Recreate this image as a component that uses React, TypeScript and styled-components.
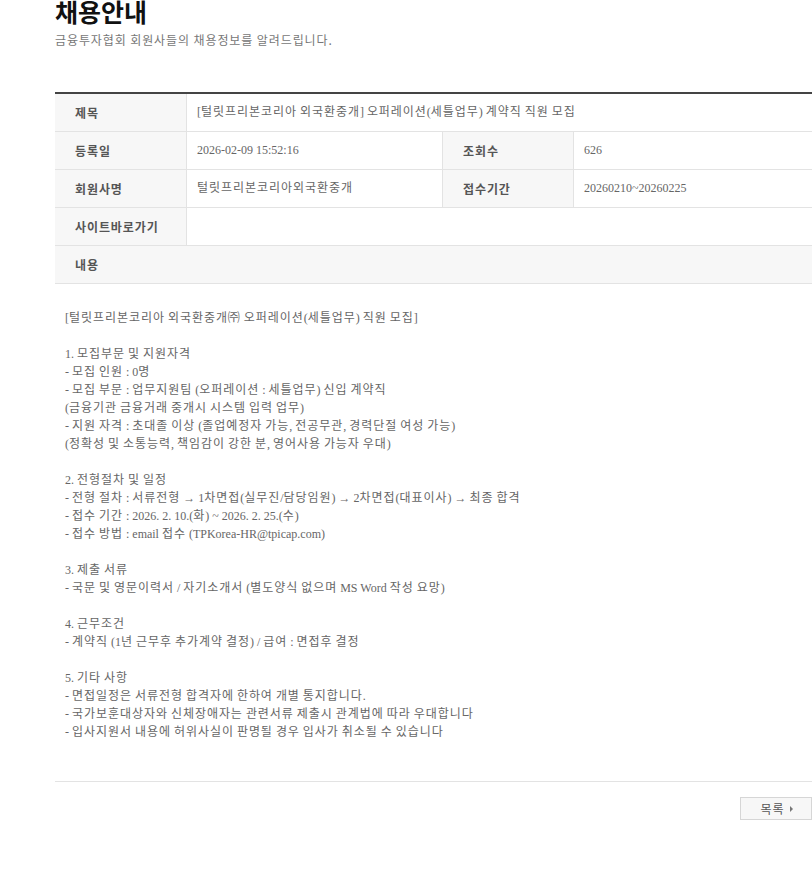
import styled, { createGlobalStyle } from 'styled-components';

const GlobalStyle = createGlobalStyle`
  html, body {
    margin: 0;
    padding: 0;
    background: #fff;
    overflow-x: hidden;
  }
  body {
    font-family: "Liberation Serif", "Noto Sans CJK KR", serif;
  }
`;

const body = `[털릿프리본코리아 외국환중개㈜ 오퍼레이션(세틀업무) 직원 모집]

1. 모집부문 및 지원자격
- 모집 인원 : 0명
- 모집 부문 : 업무지원팀 (오퍼레이션 : 세틀업무) 신입 계약직
(금융기관 금융거래 중개시 시스템 입력 업무)
- 지원 자격 : 초대졸 이상 (졸업예정자 가능, 전공무관, 경력단절 여성 가능)
(정확성 및 소통능력, 책임감이 강한 분, 영어사용 가능자 우대)

2. 전형절차 및 일정
- 전형 절차 : 서류전형 → 1차면접(실무진/담당임원) → 2차면접(대표이사) → 최종 합격
- 접수 기간 : 2026. 2. 10.(화) ~ 2026. 2. 25.(수)
- 접수 방법 : email 접수 (TPKorea-HR@tpicap.com)

3. 제출 서류
- 국문 및 영문이력서 / 자기소개서 (별도양식 없으며 MS Word 작성 요망)

4. 근무조건
- 계약직 (1년 근무후 추가계약 결정) / 급여 : 면접후 결정

5. 기타 사항
- 면접일정은 서류전형 합격자에 한하여 개별 통지합니다.
- 국가보훈대상자와 신체장애자는 관련서류 제출시 관계법에 따라 우대합니다
- 입사지원서 내용에 허위사실이 판명될 경우 입사가 취소될 수 있습니다`;

// hangul glyphs in the reference are full width, so runs of them get a bit of tracking
const han = (text: string) =>
  text.split(/([\uAC00-\uD7A3\u3200-\u32FF]+)/).map((part, i) =>
    /[\uAC00-\uD7A3\u3200-\u32FF]/.test(part) ? <S.Han key={i}>{part}</S.Han> : part
  );

export default function App() {
  return (
    <>
      <GlobalStyle />
      <S.Page>
        <S.Header>
          <h2 className='title'>채용안내</h2>
          <p className='sub'>금융투자협회 회원사들의 채용정보를 알려드립니다.</p>
        </S.Header>

        <S.Board>
          <S.Row $cols='132px 1fr'>
            <S.Label>제목</S.Label>
            <S.Value>{han('[털릿프리본코리아 외국환중개] 오퍼레이션(세틀업무) 계약직 직원 모집')}</S.Value>
          </S.Row>
          <S.Row $cols='132px 255px 132px 1fr'>
            <S.Label>등록일</S.Label>
            <S.Value>2026-02-09 15:52:16</S.Value>
            <S.Label $inner>조회수</S.Label>
            <S.Value>626</S.Value>
          </S.Row>
          <S.Row $cols='132px 255px 132px 1fr'>
            <S.Label>회원사명</S.Label>
            <S.Value>{han('털릿프리본코리아외국환중개')}</S.Value>
            <S.Label $inner>접수기간</S.Label>
            <S.Value>20260210~20260225</S.Value>
          </S.Row>
          <S.Row $cols='132px 1fr'>
            <S.Label>사이트바로가기</S.Label>
            <S.Value />
          </S.Row>
          <S.Row $cols='1fr' $shaded>
            <S.Label $plain>내용</S.Label>
          </S.Row>
          <S.Content>
            {body.split('\n').map((line, i) => (
              <S.Line key={i}>{line ? han(line) : '\u00a0'}</S.Line>
            ))}
          </S.Content>
        </S.Board>

        <S.Actions>
          <S.ListButton>
            목록
            <span className='arrow' />
          </S.ListButton>
        </S.Actions>
      </S.Page>
    </>
  );
}

const S = {
  Page: styled.div`
    width: 757px;
    margin-left: 55px;
    padding-bottom: 60px;
  `,
  Header: styled.div`
    font-family: "Noto Sans CJK KR", "Noto Sans", sans-serif;
    .title {
      margin: -1px 0 0;
      font-size: 25px;
      line-height: 24px;
      font-weight: 700;
      color: #111;
    }
    .sub {
      margin: 8px 0 0;
      font-size: 12px;
      line-height: 18px;
      color: #777;
      letter-spacing: 0.9px;
    }
  `,
  Board: styled.div`
    margin-top: 43px;
    border-top: 2px solid #444;
    border-bottom: 1px solid #e3e3e3;
  `,
  Row: styled.div<{ $cols: string; $shaded?: boolean }>`
    display: grid;
    grid-template-columns: ${(p) => p.$cols};
    height: 38px;
    box-sizing: border-box;
    border-bottom: 1px solid #e3e3e3;
    background: ${(p) => (p.$shaded ? '#f7f7f7' : '#fff')};
  `,
  Label: styled.div<{ $inner?: boolean; $plain?: boolean }>`
    display: flex;
    align-items: center;
    padding-left: 20px;
    box-sizing: border-box;
    background: #f7f7f7;
    border-right: ${(p) => (p.$plain ? 'none' : '1px solid #e3e3e3')};
    border-left: ${(p) => (p.$inner ? '1px solid #e3e3e3' : 'none')};
    font-family: "Noto Sans CJK KR", "Noto Sans", sans-serif;
    font-size: 12px;
    font-weight: 700;
    color: #555;
    letter-spacing: 0.9px;
  `,
  Value: styled.div`
    padding-left: 10px;
    font-size: 12px;
    line-height: 37px;
    color: #666;
    white-space: nowrap;
    overflow: hidden;
  `,
  Han: styled.span`
    letter-spacing: 0.95px;
  `,
  Content: styled.div`
    padding: 25px 10px 40px;
    font-size: 12px;
    color: #666;
  `,
  Line: styled.div`
    height: 18px;
    line-height: 18px;
    white-space: nowrap;
  `,
  Actions: styled.div`
    display: flex;
    justify-content: flex-end;
    margin-top: 15px;
  `,
  ListButton: styled.button`
    display: flex;
    align-items: center;
    justify-content: center;
    gap: 6px;
    width: 72px;
    height: 23px;
    padding: 0 0 0 2px;
    background: #f7f7f7;
    border: 1px solid #d6d6d6;
    font-family: "Noto Sans CJK KR", "Noto Sans", sans-serif;
    font-size: 12px;
    color: #555;
    letter-spacing: 0.9px;
    cursor: pointer;
    .arrow {
      width: 0;
      height: 0;
      border-top: 3px solid transparent;
      border-bottom: 3px solid transparent;
      border-left: 3px solid #777;
    }
  `,
};
